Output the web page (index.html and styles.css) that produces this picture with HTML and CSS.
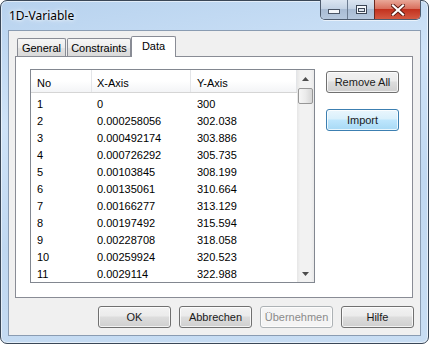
FILE: index.html
```html
<!DOCTYPE html>
<html lang="de">
<head>
  <meta charset="UTF-8">
  <title>1D-Variable</title>
  <link rel="stylesheet" href="styles.css">
</head>
<body>
  <div class="window">
    <div class="titlebar">
      <span class="title">1D-Variable</span>
      <div class="caption-buttons">
        <span class="cb cb-min">
          <svg width="12" height="5" viewBox="0 0 12 5"><rect x="0.5" y="0.5" width="11" height="4" fill="#f4f7fb" stroke="#4a5566"/></svg>
        </span>
        <span class="cb cb-max">
          <svg width="11" height="9" viewBox="0 0 11 9"><rect x="0.5" y="0.5" width="10" height="8" fill="#f4f7fb" stroke="#3c4656"/><rect x="2.5" y="3.5" width="6" height="3" fill="#3c4656" stroke="#3c4656"/><rect x="3" y="4" width="5" height="2" fill="#dfe6ef"/></svg>
        </span>
        <span class="cb cb-close">
          <svg width="14" height="12" viewBox="0 0 14 12"><path d="M2 1.5 L12 10.5 M12 1.5 L2 10.5" stroke="#5a1a12" stroke-width="4" stroke-linecap="square"/><path d="M2 1.5 L12 10.5 M12 1.5 L2 10.5" stroke="#ffffff" stroke-width="2.2" stroke-linecap="square"/></svg>
        </span>
      </div>
    </div>

    <div class="client">
      <div class="tabs">
        <div class="tab tab-general">General</div>
        <div class="tab tab-constraints">Constraints</div>
        <div class="tab tab-data active">Data</div>
      </div>

      <div class="panel">
        <div class="listbox">
          <div class="list-main">
            <div class="list-head">
              <span class="col col-no">No</span>
              <span class="col col-x">X-Axis</span>
              <span class="col col-y">Y-Axis</span>
            </div>
            <div class="list-rows">
              <div class="row"><span class="col col-no">1</span><span class="col col-x">0</span><span class="col col-y">300</span></div>
              <div class="row"><span class="col col-no">2</span><span class="col col-x">0.000258056</span><span class="col col-y">302.038</span></div>
              <div class="row"><span class="col col-no">3</span><span class="col col-x">0.000492174</span><span class="col col-y">303.886</span></div>
              <div class="row"><span class="col col-no">4</span><span class="col col-x">0.000726292</span><span class="col col-y">305.735</span></div>
              <div class="row"><span class="col col-no">5</span><span class="col col-x">0.00103845</span><span class="col col-y">308.199</span></div>
              <div class="row"><span class="col col-no">6</span><span class="col col-x">0.00135061</span><span class="col col-y">310.664</span></div>
              <div class="row"><span class="col col-no">7</span><span class="col col-x">0.00166277</span><span class="col col-y">313.129</span></div>
              <div class="row"><span class="col col-no">8</span><span class="col col-x">0.00197492</span><span class="col col-y">315.594</span></div>
              <div class="row"><span class="col col-no">9</span><span class="col col-x">0.00228708</span><span class="col col-y">318.058</span></div>
              <div class="row"><span class="col col-no">10</span><span class="col col-x">0.00259924</span><span class="col col-y">320.523</span></div>
              <div class="row"><span class="col col-no">11</span><span class="col col-x">0.0029114</span><span class="col col-y">322.988</span></div>
            </div>
          </div>
          <div class="scrollbar">
            <div class="sb-arrow">
              <svg width="7" height="4" viewBox="0 0 7 4"><path d="M0 4 L3.5 0 L7 4 Z" fill="#4d4d4d"/></svg>
            </div>
            <div class="sb-thumb"></div>
            <div class="sb-track"></div>
            <div class="sb-arrow">
              <svg width="7" height="4" viewBox="0 0 7 4"><path d="M0 0 L7 0 L3.5 4 Z" fill="#4d4d4d"/></svg>
            </div>
          </div>
        </div>

        <div class="side-buttons">
          <button class="btn">Remove All</button>
          <button class="btn btn-default">Import</button>
        </div>
      </div>

      <div class="dialog-buttons">
        <button class="btn">OK</button>
        <button class="btn">Abbrechen</button>
        <button class="btn btn-disabled">Übernehmen</button>
        <button class="btn">Hilfe</button>
      </div>
    </div>
  </div>
</body>
</html>
```

FILE: styles.css
```css
body {
  margin: 0;
  background: #ffffff;
  font-family: "Liberation Sans", Arial, sans-serif;
  font-size: 11px;
  color: #000;
}

.window {
  box-sizing: border-box;
  width: 429px;
  height: 344px;
  border: 1px solid #3a4757;
  border-radius: 7px;
  padding: 0 7px 7px;
  display: flex;
  flex-direction: column;
  background: linear-gradient(170deg, #b7d2ee 0%, #cfe3f8 30%, #c0d8f1 60%, #c8ddf3 100%);
  box-shadow: inset 0 0 0 1px rgba(255, 255, 255, 0.55);
}

/* title bar */
.titlebar {
  height: 29px;
  display: flex;
  justify-content: space-between;
  align-items: flex-start;
}

.title {
  font-family: "Noto Sans", "Open Sans", sans-serif;
  font-size: 12px;
  line-height: 16px;
  padding: 7px 0 0 1px;
  color: #000;
  text-shadow: 0 0 6px #ffffff, 0 0 3px #ffffff;
}

.caption-buttons {
  display: flex;
  margin-top: -1px;
  height: 19px;
  border: 1px solid #4d5b6e;
  border-top: none;
  border-radius: 0 0 5px 5px;
  overflow: hidden;
  box-shadow: 0 1px 0 rgba(255, 255, 255, 0.6);
}

.cb {
  display: flex;
  align-items: center;
  justify-content: center;
}

.cb-min {
  width: 27px;
  background: linear-gradient(#dbe5f1 0%, #c4d3e5 45%, #a9bcd4 50%, #b6c8de 100%);
  border-right: 1px solid #6b7b90;
  padding-top: 3px;
  box-sizing: border-box;
}

.cb-max {
  width: 26px;
  background: linear-gradient(#dbe5f1 0%, #c4d3e5 45%, #a9bcd4 50%, #b6c8de 100%);
  border-right: 1px solid #6b2a20;
}

.cb-close {
  width: 45px;
  background: linear-gradient(#e9a898 0%, #d9705e 45%, #c3321f 50%, #d45a43 100%);
}

/* client area */
.client {
  flex: 1;
  box-sizing: border-box;
  background: #f0f0f0;
  border: 1px solid #8a9cb2;
  padding: 6px 6px 0 6px;
  display: flex;
  flex-direction: column;
}

.tabs {
  height: 20px;
  display: flex;
  align-items: flex-end;
  position: relative;
  z-index: 1;
  margin-bottom: -1px;
}

.tab {
  box-sizing: border-box;
  height: 18px;
  border: 1px solid #898c95;
  border-bottom: none;
  border-radius: 2px 2px 0 0;
  background: linear-gradient(#f6f6f6 0%, #ececec 50%, #e2e2e2 51%, #dadada 100%);
  text-align: center;
  line-height: 18px;
  margin-bottom: 1px;
}

.tab-general {
  width: 49px;
  margin-left: 2px;
}

.tab-constraints {
  width: 64px;
  margin-left: 1px;
}

.tab-data {
  width: 45px;
}

.tab.active {
  height: 21px;
  margin-bottom: 0;
  background: #ffffff;
  line-height: 18px;
}

.panel {
  box-sizing: border-box;
  width: 398px;
  height: 242px;
  border: 1px solid #898c95;
  background: #ffffff;
  padding: 12px 0 0 14px;
  display: flex;
  align-items: flex-start;
}

/* list view */
.listbox {
  box-sizing: border-box;
  width: 285px;
  height: 214px;
  border: 1px solid #828790;
  display: flex;
}

.list-main {
  flex: 1;
}

.list-head,
.row {
  display: grid;
  grid-template-columns: 61px 99px 1fr;
}

.list-head {
  height: 22px;
  border-bottom: 1px solid #d5d5d5;
  background: linear-gradient(#ffffff 0%, #ffffff 50%, #f3f4f6 100%);
}

.list-head .col {
  box-sizing: border-box;
  border-right: 1px solid #e3e5e8;
  padding-top: 5px;
  line-height: 17px;
}

.list-rows {
  padding-top: 3px;
}

.row {
  height: 17px;
  line-height: 17px;
}

.col-no {
  padding-left: 6px;
}

.col-x {
  padding-left: 5px;
}

.col-y {
  padding-left: 6px;
}

.scrollbar {
  width: 17px;
  display: flex;
  flex-direction: column;
  background: linear-gradient(to right, #e6e6e6 0%, #f2f2f2 20%, #f2f2f2 80%, #e9e9e9 100%);
}

.sb-arrow {
  height: 17px;
  display: flex;
  align-items: center;
  justify-content: center;
}

.sb-thumb {
  box-sizing: border-box;
  height: 16px;
  margin: 1px 1px 0;
  border: 1px solid #979797;
  border-radius: 2px;
  background: linear-gradient(to right, #f6f6f6 0%, #ebebeb 50%, #d6d6d6 100%);
}

.sb-track {
  flex: 1;
}

/* buttons */
.btn {
  box-sizing: border-box;
  width: 73px;
  height: 22px;
  padding: 0;
  font-family: "Liberation Sans", Arial, sans-serif;
  font-size: 11px;
  font-weight: normal;
  color: #1a1a1a;
  border: 1px solid #707070;
  border-radius: 3px;
  background: linear-gradient(#f2f2f2 0%, #ebebeb 45%, #dddddd 50%, #cfcfcf 100%);
  box-shadow: inset 0 0 0 1px rgba(255, 255, 255, 0.75);
}

.btn-default {
  border-color: #3c7fb1;
  background: linear-gradient(#eaf6fd 0%, #d9f0fc 45%, #bee6fd 50%, #a7d9f5 100%);
}

.btn-disabled {
  border-color: #adb2b5;
  background: #f4f4f4;
  color: #8b8b8b;
}

.side-buttons {
  margin: 2px 0 0 11px;
  display: flex;
  flex-direction: column;
  gap: 16px;
}

.dialog-buttons {
  margin-top: 8px;
  display: flex;
  justify-content: flex-end;
  gap: 8px;
}
```
